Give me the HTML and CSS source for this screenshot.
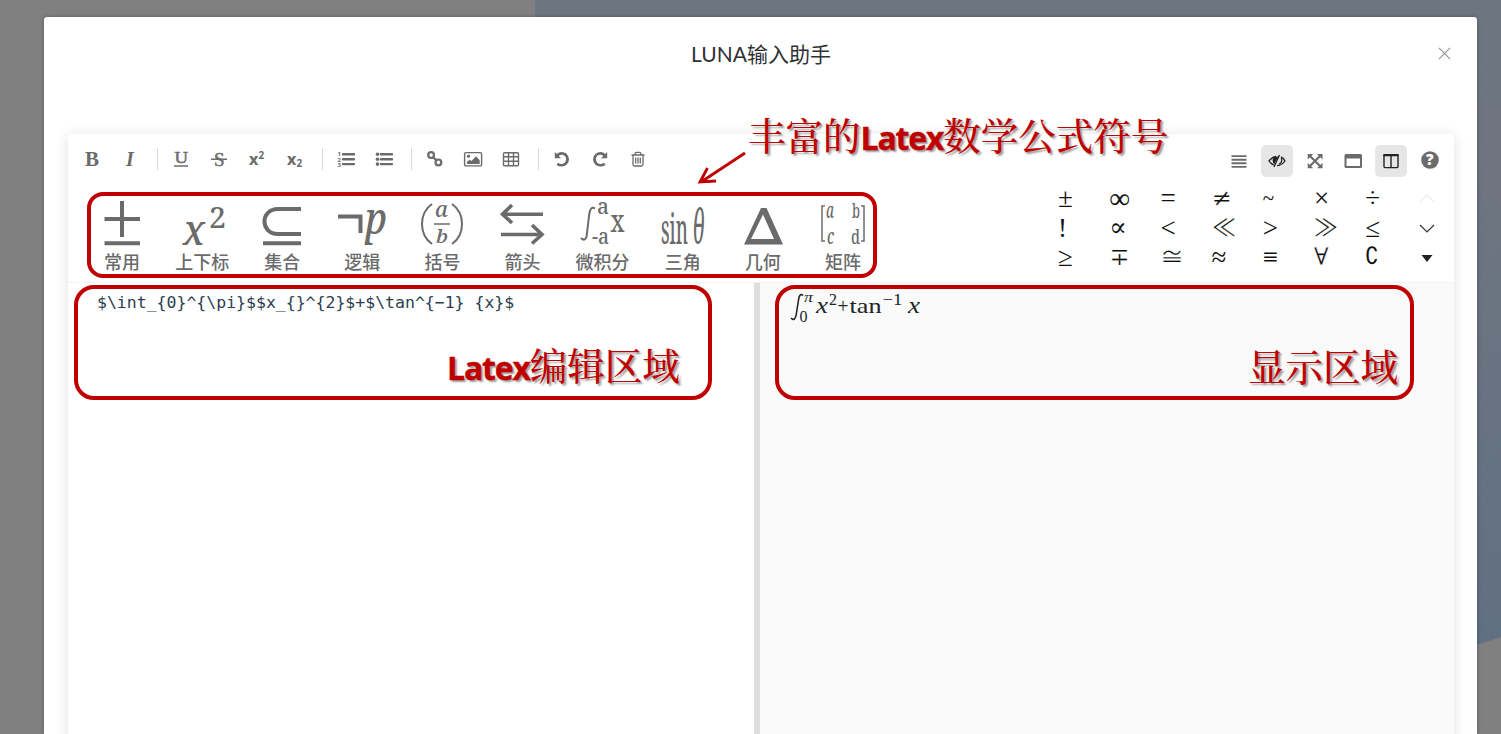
FILE: index.html
```html
<!DOCTYPE html>
<html lang="zh-CN">
<head>
<meta charset="utf-8">
<title>LUNA输入助手</title>
<link rel="stylesheet" href="styles.css">
</head>
<body>
<div class="page">
  <svg class="backdrop" viewBox="0 0 1501 734">
    <defs>
      <linearGradient id="sky" x1="0" y1="0" x2="0" y2="1">
        <stop offset="0" stop-color="#6d7680"/><stop offset=".22" stop-color="#6f7580"/><stop offset=".55" stop-color="#677382"/><stop offset="1" stop-color="#5f6e84"/>
      </linearGradient>
    </defs>
    <path fill="url(#sky)" d="M535 0H1501V637L1477 645L535 734Z"/>
  </svg>
  <main class="dialog">
    <header class="dialog-head">
      <h1 class="title">LUNA输入助手</h1>
      <svg class="close" viewBox="0 0 14 14"><path d="M1 1L13 13M13 1L1 13"/></svg>
    </header>
    <section class="editor">
      <div class="tools">
        <div class="group">
          <span class="tool"><svg viewBox="0 0 24 24"><text class="serif bold" x="5" y="18.5" font-size="20" textLength="14" lengthAdjust="spacingAndGlyphs">B</text></svg></span>
          <span class="tool"><svg viewBox="0 0 24 24"><text class="serif bold ital" x="8" y="18.5" font-size="20">I</text></svg></span>
          <i class="sep"></i>
          <span class="tool"><svg viewBox="0 0 24 24"><text class="serif semi" x="5.5" y="16.2" font-size="17" textLength="13.5" lengthAdjust="spacingAndGlyphs">U</text><path class="line" d="M5 19h14"/></svg></span>
          <span class="tool"><svg viewBox="0 0 24 24"><text class="serif semi" x="7" y="18.5" font-size="19">S</text><path class="line" d="M4 12.3h16"/></svg></span>
          <span class="tool"><svg viewBox="0 0 24 24"><text class="sans bold" x="4" y="18" font-size="16">x</text><text class="sans bold" x="13.5" y="12" font-size="10">2</text></svg></span>
          <span class="tool"><svg viewBox="0 0 24 24"><text class="sans bold" x="4" y="17.5" font-size="16">x</text><text class="sans bold" x="13.5" y="20" font-size="10">2</text></svg></span>
          <i class="sep"></i>
          <span class="tool"><svg viewBox="0 0 24 24"><path class="thick" d="M9 7.3h11M9 12.2h11M9 17.1h11"/><text class="sans bold" x="3.5" y="9" font-size="6">1</text><text class="sans bold" x="3.5" y="14.5" font-size="6">2</text><text class="sans bold" x="3.5" y="20" font-size="6">3</text></svg></span>
          <span class="tool"><svg viewBox="0 0 24 24"><path class="thick" d="M9 7.3h11M9 12.2h11M9 17.1h11"/><circle cx="5.5" cy="7.3" r="1.8"/><circle cx="5.5" cy="12.2" r="1.8"/><circle cx="5.5" cy="17.1" r="1.8"/></svg></span>
          <i class="sep"></i>
          <span class="tool"><svg viewBox="0 0 24 24"><circle class="ring" cx="8.1" cy="8.1" r="2.9"/><circle class="ring" cx="15.4" cy="15.4" r="2.9"/><path class="ring" d="M9.8 9.8L13.7 13.7"/></svg></span>
          <span class="tool"><svg viewBox="0 0 24 24"><rect class="line" x="3.6" y="5.6" width="17" height="13.3" rx="1.2"/><circle cx="7.5" cy="9.2" r="1.6"/><path d="M6 17v-2.2l2.7-2 1.8 1.2L15 9.2l3.7 4V17Z"/></svg></span>
          <span class="tool"><svg viewBox="0 0 24 24"><path class="line" d="M5.5 5.7h13q1 0 1 1v11q0 1-1 1h-13q-1 0-1-1v-11q0-1 1-1ZM4.5 9.7h15M4.5 14.2h15M9.5 6v13M14.5 6v13"/></svg></span>
          <i class="sep"></i>
          <span class="tool"><svg viewBox="0 0 24 24"><path class="arc" d="M7 8.6C9.5 5.8 13 5.9 15.5 7.7C18.2 10 18.2 14 15.9 16.4C13.6 18.6 10 18.7 7.3 16.8"/><path d="M4.8 5v6.2h6.2Z"/></svg></span>
          <span class="tool"><svg viewBox="0 0 24 24"><g transform="matrix(-1 0 0 1 24 0)"><path class="arc" d="M7 8.6C9.5 5.8 13 5.9 15.5 7.7"/><path class="arc" d="M7 8.6C4.3 11.4 4.3 14 7.3 16.8" opacity="0"/><path class="arc" d="M15.5 7.7C18.2 10 18.2 14 15.9 16.4C13.6 18.6 10 18.7 7.3 16.8"/><path d="M4.8 5v6.2h6.2Z"/></g></svg></span>
          <span class="tool"><svg viewBox="0 0 24 24"><path class="fine" d="M5.5 8h13M9 8q0-2.6 1.5-2.6h3Q15 5.4 15 8M7 8v9.5q0 1.5 1.5 1.5h7q1.5 0 1.5-1.5V8M9.7 10.5v6M12 10.5v6M14.3 10.5v6"/></svg></span>
        </div>
        <div class="group modes">
          <span class="tool"><svg viewBox="0 0 24 24"><path class="bars" d="M4.5 7.1h15M4.500 10.700h15M4.500 14.300h15M4.500 17.900h15"/></svg></span>
          <span class="tool on"><svg viewBox="0 0 24 24"><path class="fine" d="M14.5 6L9 18M11 7.5C8 8 5.7 9.6 4 12c1.3 2 3 3.3 5 4M16 7.8c1.800.8 3.200 2.300 4 4.200-2 3-4.500 4.500-8 4.700M16.200 9.300c1.200 2.300.5 4.500-2.200 6"/><path d="M13.300 7.600Q7.500 7.500 7.600 11.500Q7.700 14 9.500 15Z"/></svg></span>
          <span class="tool"><svg viewBox="0 0 24 24"><path class="ring" d="M7 7L17 17M17 7L7 17"/><path d="M4.700 4.900h5.500L4.700 10.400ZM19.500 4.900H14L19.500 10.400ZM4.700 19.300h5.500L4.700 13.800ZM19.500 19.300H14L19.500 13.800Z"/></svg></span>
          <span class="tool"><svg viewBox="0 0 24 24"><path fill-rule="evenodd" d="M5 5h14.500q1.500 0 1.500 1.500v11q0 1.500-1.500 1.500H5q-1.500 0-1.500-1.500v-11Q3.500 5 5 5ZM5.500 9.500V17h13.500V9.500Z"/></svg></span>
          <span class="tool on"><svg viewBox="0 0 24 24"><path class="line" d="M5 6h14v11.600q0 1-1 1H6q-1 0-1-1ZM12 6v13"/><path d="M4.300 7.300V6.500q0-1.500 1.500-1.500h12.400q1.500 0 1.500 1.500v.8Z"/></svg></span>
          <span class="tool help"><svg viewBox="0 0 24 24"><circle cx="12" cy="11" r="8.8"/><text class="qmark" x="8" y="16.3" font-size="15">?</text></svg></span>
        </div>
      </div>
      <div class="palette">
        <div class="categories">
          <div class="cat"><svg viewBox="0 0 80 50"><path class="heavy" d="M22.5 20H58M40 2V38M22.5 44.2H58"/></svg><span>常用</span></div>
          <div class="cat"><svg viewBox="0 0 80 50"><text class="math ital" x="21" y="46" font-size="42" textLength="22" lengthAdjust="spacingAndGlyphs">x</text><text class="math" x="47" y="29" font-size="29" textLength="17" lengthAdjust="spacingAndGlyphs">2</text></svg><span>上下标</span></div>
          <div class="cat"><svg viewBox="0 0 80 50"><path class="heavy" d="M59 10H36C18 10 18 35 36 35H59M21 44.2H59"/></svg><span>集合</span></div>
          <div class="cat"><svg viewBox="0 0 80 50"><path class="heavy" d="M16 17.5H38.5V34"/><text class="math ital" x="43" y="35" font-size="44" textLength="22" lengthAdjust="spacingAndGlyphs">p</text></svg><span>逻辑</span></div>
          <div class="cat"><svg viewBox="0 0 80 50"><path class="paren" d="M30 5Q20 12 20 25T30 45M50 5Q60 12 60 25T50 45"/><path class="line" d="M32 25H48"/><text class="math ital" x="33" y="18" font-size="21" textLength="13" lengthAdjust="spacingAndGlyphs">a</text><text class="math ital" x="34" y="44" font-size="18" textLength="12" lengthAdjust="spacingAndGlyphs">b</text></svg><span>括号</span></div>
          <div class="cat"><svg viewBox="0 0 80 50"><path class="heavy arrow" d="M61 15.2H21M30 6L20.5 15.2L30 24M19 35.5H59M50 26L60 35.5L50 44.5"/></svg><span>箭头</span></div>
          <div class="cat"><svg viewBox="0 0 80 50"><path class="paren" d="M32 9.5C28 6.5 26.5 12 26 17L24 34C23.5 41 21 42 18 39"/><text class="math" x="34" y="15" font-size="21" textLength="12" lengthAdjust="spacingAndGlyphs">a</text><text class="math" x="29" y="45" font-size="21" textLength="17" lengthAdjust="spacingAndGlyphs">-a</text><text class="math" x="47.5" y="32.5" font-size="30" textLength="14" lengthAdjust="spacingAndGlyphs">x</text></svg><span>微积分</span></div>
          <div class="cat"><svg viewBox="0 0 80 50"><text class="math" x="18" y="45" font-size="42" textLength="27" lengthAdjust="spacingAndGlyphs">sin</text><text class="math ital" x="49.5" y="45" font-size="47" textLength="12" lengthAdjust="spacingAndGlyphs">θ</text></svg><span>三角</span></div>
          <div class="cat"><svg viewBox="0 0 80 50"><path fill-rule="evenodd" d="M38 9H43.5L60 45.5H21ZM40 15.5L28 40H51Z"/></svg><span>几何</span></div>
          <div class="cat"><svg viewBox="0 0 80 50"><path class="fine" d="M22 7H19V42H22M58 7H61V42H58"/><text class="math ital" x="23" y="19" font-size="21" textLength="8" lengthAdjust="spacingAndGlyphs">a</text><text class="math" x="49" y="19" font-size="20" textLength="8" lengthAdjust="spacingAndGlyphs">b</text><text class="math ital" x="24" y="45" font-size="21" textLength="7" lengthAdjust="spacingAndGlyphs">c</text><text class="math" x="48" y="45" font-size="20" textLength="9" lengthAdjust="spacingAndGlyphs">d</text></svg><span>矩阵</span></div>
        </div>
        <div class="symbols">
          <span>±</span><span class="wide">∞</span><span>=</span><span class="thin">≠</span><span class="small">~</span><span>×</span><span>÷</span><svg class="nav faint" viewBox="0 0 16 16"><path d="M1 11L8 4L15 11"/></svg>
          <span>!</span><span class="prop">∝</span><span>&lt;</span><span class="thin">≪</span><span>&gt;</span><span class="thin">≫</span><span>≤</span><svg class="nav" viewBox="0 0 16 16"><path d="M1 4L8 11L15 4"/></svg>
          <span>≥</span><span class="thin">∓</span><span class="thin">≅</span><span>≈</span><span>≡</span><span class="thin">∀</span><span class="comp">∁</span><svg class="nav fill" viewBox="0 0 16 16"><path d="M2.5 5H13.5L8 12Z"/></svg>
        </div>
      </div>
      <div class="panes">
        <div class="source">$\int_{0}^{\pi}$$x_{}^{2}$+$\tan^{−1} {x}$</div>
        <div class="divider"></div>
        <div class="preview">
          <svg class="formula" viewBox="0 0 140 40"><path class="integral" d="M14 4.5C11.5 2 10 5 9.5 9L7.3 23C6.8 28 4.5 30 2 27"/><text class="tex ital" x="15" y="10.5" font-size="15" textLength="9" lengthAdjust="spacingAndGlyphs">π</text><text class="tex" x="10.5" y="30.5" font-size="16" textLength="8" lengthAdjust="spacingAndGlyphs">0</text><text class="tex ital" x="27" y="22" font-size="23" textLength="12" lengthAdjust="spacingAndGlyphs">x</text><text class="tex" x="40" y="14" font-size="16" textLength="8" lengthAdjust="spacingAndGlyphs">2</text><text class="tex" x="48.5" y="22" font-size="20" textLength="11" lengthAdjust="spacingAndGlyphs">+</text><text class="tex" x="60.5" y="22" font-size="22" textLength="32" lengthAdjust="spacingAndGlyphs">tan</text><text class="tex" x="93.5" y="14" font-size="16" textLength="20" lengthAdjust="spacingAndGlyphs">−1</text><text class="tex ital" x="119" y="22" font-size="23" textLength="12" lengthAdjust="spacingAndGlyphs">x</text></svg>
        </div>
      </div>
    </section>
  </main>
  <div class="frame frame-symbols"></div>
  <div class="frame frame-source"></div>
  <div class="frame frame-preview"></div>
  <svg class="pointer" viewBox="0 0 60 40"><path d="M50 4L6 33M12.5 19L5 33L21 32"/></svg>
  <div class="note note-symbols">丰富的<b>Latex</b>数学公式符号</div>
  <div class="note note-source"><b>Latex</b>编辑区域</div>
  <div class="note note-preview">显示区域</div>
</div>
</body>
</html>
```
FILE: styles.css
```css
* { box-sizing: border-box; }
body { margin: 0; overflow: hidden; font-family: "Noto Sans", "Noto Sans CJK SC", sans-serif; }
.page { position: relative; height: 734px; padding: 17px 24px 0 44px; background: #808080; overflow: hidden; }
.backdrop { position: absolute; left: 0; top: 0; width: 1501px; height: 734px; }
.dialog { position: relative; height: 717px; padding: 0 23px 0 24px; background: #fff; border-radius: 3px 3px 0 0; box-shadow: 0 0 4px rgba(0,0,0,.3); overflow: hidden; }
.dialog-head { position: relative; height: 117px; padding-top: 20px; }
.title { margin: 0; text-align: center; font: 400 21px/34px Lato, "Noto Sans CJK SC", sans-serif; color: #303133; }
.close { position: absolute; right: 3px; top: 30px; width: 13px; height: 13px; fill: none; stroke: #909399; stroke-width: 1.2; }
.editor { display: flex; flex-direction: column; height: 640px; background: #fff; border-radius: 4px 4px 0 0; box-shadow: 0 2px 14px rgba(0,0,0,.13); }
.tools { display: flex; justify-content: space-between; height: 52px; padding: 6px 5px 0; }
.group { display: flex; align-items: center; height: 38px; color: #6b6b6b; }
.modes { height: 41px; }
.tool { display: flex; align-items: center; justify-content: center; width: 32px; height: 32px; margin: 0 3px; border-radius: 5px; fill: #6b6b6b; stroke: #6b6b6b; }
.tool.on { background: #e6e6e6; fill: #222; stroke: #222; }
.tool.help { margin-left: 4px; }
.tool svg { width: 24px; height: 24px; stroke-width: 0; overflow: visible; }
.tool .line { fill: none; stroke-width: 1.4; }
.tool .fine { fill: none; stroke-width: 1.3; }
.tool .thick { stroke-width: 2.4; stroke-linecap: round; }
.tool .bars { stroke-width: 1.9; }
.tool .ring { fill: none; stroke-width: 2.2; }
.tool .arc { fill: none; stroke-width: 2.8; }
.qmark { fill: #fff; font-family: "Open Sans", sans-serif; font-weight: 800; }
.sep { width: 1px; height: 22px; margin: 0 4px 0 8px; background: #d9d9d9; }
.serif { font-family: "Liberation Serif", serif; }
.sans { font-family: "Open Sans", sans-serif; }
.tool .semi { stroke-width: .5; }
.bold { font-weight: 700; }
.ital { font-style: italic; }
.palette { display: flex; justify-content: space-between; height: 97px; border-bottom: 1px solid #edf3f8; }
.categories { display: flex; padding-left: 14px; }
.cat { width: 80.1px; height: 90px; padding-top: 13px; text-align: center; font: 500 18px/24px "Noto Sans CJK SC", sans-serif; color: #6b6b6b; }
.cat svg { display: block; width: 80px; height: 50px; fill: #6b6b6b; stroke: #6b6b6b; stroke-width: 0; overflow: visible; }
.cat span { display: block; }
.cat .heavy { fill: none; stroke-width: 4; }
.cat .arrow { stroke-width: 3.6; }
.cat .paren { fill: none; stroke-width: 2; }
.cat .fine, .cat .line { fill: none; stroke-width: 1.5; }
.math { font-family: "Noto Serif", "DejaVu Serif Condensed", "Liberation Serif", serif; }
.symbols { display: grid; grid-template-columns: repeat(7, 51.2px) 16px; grid-template-rows: repeat(3, 29.7px); width: 396px; margin-top: -3px; font: 27px/30px "Liberation Serif", "DejaVu Serif", serif; color: #111; }
.symbols span { height: 30px; }
.symbols .thin { font: 24px/30px "DejaVu Serif", serif; -webkit-text-stroke: .25px #fff; }
.symbols .wide { font-size: 29px; }
.symbols .prop { font-size: 26px; }
.symbols .small { font-size: 21px; }
.symbols .comp { font: 24px/28px "DejaVu Sans Condensed", "DejaVu Sans", sans-serif; }
.nav { width: 16px; height: 16px; margin: 8px 0 0 3px; fill: none; stroke: #333; stroke-width: 1.2; }
.nav.faint { stroke: #ededed; }
.nav.fill { fill: #222; stroke: none; }
.panes { display: grid; grid-template-columns: 686px 6px 1fr; flex: 1; }
.source { padding: 9px 29px; font: 16.5px/22px "DejaVu Sans Mono", monospace; color: #2c3e50; white-space: pre; }
.divider { background: #dedede; }
.preview { padding: 8px 29px; background: #fafafa; }
.formula { display: block; width: 140px; height: 40px; fill: #212529; overflow: visible; }
.tex { font-family: "Liberation Serif", serif; }
.integral { fill: none; stroke: #212529; stroke-width: 1.6; }
.frame { position: absolute; border: 4px solid #c00000; border-radius: 20px; }
.frame-symbols { left: 87px; top: 192px; width: 790px; height: 86px; border-radius: 16px; }
.frame-source { left: 74px; top: 285px; width: 638px; height: 115px; }
.frame-preview { left: 775px; top: 285px; width: 639px; height: 115px; }
.pointer { position: absolute; left: 695px; top: 149px; width: 60px; height: 40px; fill: none; stroke: #c00000; stroke-width: 2.8; }
.note { position: absolute; font: 500 37.5px/46px "Noto Serif CJK SC", "Noto Sans CJK SC", serif; color: #c00000; text-shadow: 2px 2px 2px rgba(0,0,0,.4); white-space: nowrap; }
.note b { font: 700 32px/46px "Open Sans", sans-serif; letter-spacing: -1.2px; -webkit-text-stroke: .4px #c00000; }
.note-symbols { left: 748px; top: 111px; }
.note-source { left: 447px; top: 341px; }
.note-preview { left: 1248px; top: 342px; }
```
